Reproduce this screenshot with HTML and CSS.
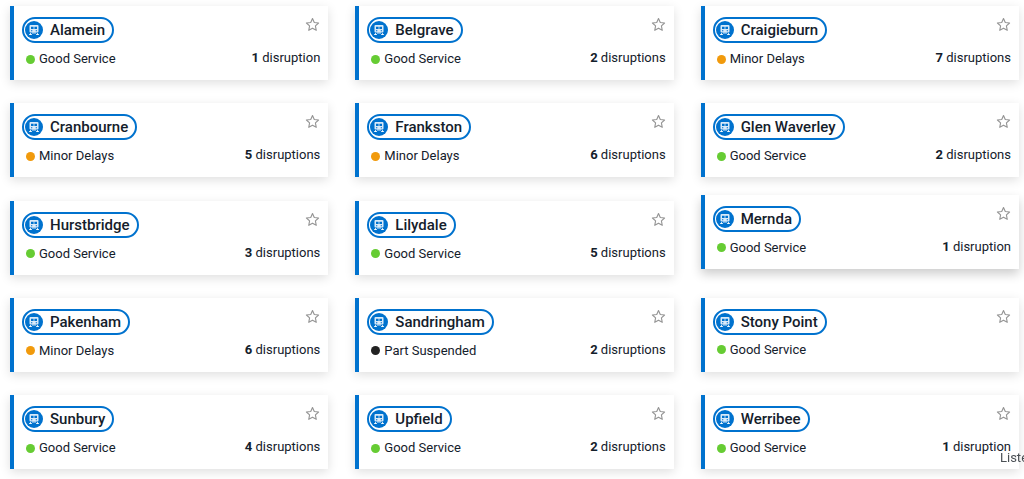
FILE: index.html
```
<!DOCTYPE html>
<html lang="en">
<head>
<meta charset="utf-8">
<meta name="viewport" content="width=device-width, initial-scale=1">
<title>Train lines</title>
<link rel="stylesheet" href="styles.css">
</head>
<body>
<svg class="sprite" aria-hidden="true">
  <symbol id="train" viewBox="0 0 18 18">
    <circle cx="9" cy="9" r="9" fill="#0072ce"/>
    <path d="M5.500 4h7q1 0 1 1v5.500q0 1-1 1h-7q-1 0-1-1V5q0-1 1-1z" fill="#fff" fill-opacity=".85"/>
    <path d="M6 5.800h2.600v2.200H6zM9.400 5.800H12v2.200H9.400zM6 9.200h1.300v1H6zM10.700 9.200H12v1h-1.300z" fill="#0072ce"/>
    <path d="M5.500 12v2M12.500 12v2M4 13.500h3M11 13.500h3M7 12h4" stroke="#fff" stroke-opacity=".8" fill="none"/>
  </symbol>
  <symbol id="star" viewBox="0 0 16 16">
    <path d="M8 1.700l1.900 4.200 4.600.5-3.400 3.100.9 4.700L8 11.900l-4 2.300.9-4.700-3.400-3.100 4.600-.5z" fill="none" stroke="#959595" stroke-width="1.200" stroke-linejoin="round"/>
  </symbol>
</svg>
<main class="lines">
  <article class="card"><a class="line" href="#alamein"><svg class="train"><use href="#train"/></svg>Alamein</a><button class="favourite" type="button" aria-label="Favourite Alamein"><svg class="star"><use href="#star"/></svg></button><span class="status good">Good Service</span><span class="count"><b>1</b> disruption</span></article>
  <article class="card"><a class="line" href="#belgrave"><svg class="train"><use href="#train"/></svg>Belgrave</a><button class="favourite" type="button" aria-label="Favourite Belgrave"><svg class="star"><use href="#star"/></svg></button><span class="status good">Good Service</span><span class="count"><b>2</b> disruptions</span></article>
  <article class="card"><a class="line" href="#craigieburn"><svg class="train"><use href="#train"/></svg>Craigieburn</a><button class="favourite" type="button" aria-label="Favourite Craigieburn"><svg class="star"><use href="#star"/></svg></button><span class="status minor">Minor Delays</span><span class="count"><b>7</b> disruptions</span></article>
  <article class="card"><a class="line" href="#cranbourne"><svg class="train"><use href="#train"/></svg>Cranbourne</a><button class="favourite" type="button" aria-label="Favourite Cranbourne"><svg class="star"><use href="#star"/></svg></button><span class="status minor">Minor Delays</span><span class="count"><b>5</b> disruptions</span></article>
  <article class="card"><a class="line" href="#frankston"><svg class="train"><use href="#train"/></svg>Frankston</a><button class="favourite" type="button" aria-label="Favourite Frankston"><svg class="star"><use href="#star"/></svg></button><span class="status minor">Minor Delays</span><span class="count"><b>6</b> disruptions</span></article>
  <article class="card"><a class="line" href="#glen-waverley"><svg class="train"><use href="#train"/></svg>Glen Waverley</a><button class="favourite" type="button" aria-label="Favourite Glen Waverley"><svg class="star"><use href="#star"/></svg></button><span class="status good">Good Service</span><span class="count"><b>2</b> disruptions</span></article>
  <article class="card"><a class="line" href="#hurstbridge"><svg class="train"><use href="#train"/></svg>Hurstbridge</a><button class="favourite" type="button" aria-label="Favourite Hurstbridge"><svg class="star"><use href="#star"/></svg></button><span class="status good">Good Service</span><span class="count"><b>3</b> disruptions</span></article>
  <article class="card"><a class="line" href="#lilydale"><svg class="train"><use href="#train"/></svg>Lilydale</a><button class="favourite" type="button" aria-label="Favourite Lilydale"><svg class="star"><use href="#star"/></svg></button><span class="status good">Good Service</span><span class="count"><b>5</b> disruptions</span></article>
  <article class="card raised"><a class="line" href="#mernda"><svg class="train"><use href="#train"/></svg>Mernda</a><button class="favourite" type="button" aria-label="Favourite Mernda"><svg class="star"><use href="#star"/></svg></button><span class="status good">Good Service</span><span class="count"><b>1</b> disruption</span></article>
  <article class="card"><a class="line" href="#pakenham"><svg class="train"><use href="#train"/></svg>Pakenham</a><button class="favourite" type="button" aria-label="Favourite Pakenham"><svg class="star"><use href="#star"/></svg></button><span class="status minor">Minor Delays</span><span class="count"><b>6</b> disruptions</span></article>
  <article class="card"><a class="line" href="#sandringham"><svg class="train"><use href="#train"/></svg>Sandringham</a><button class="favourite" type="button" aria-label="Favourite Sandringham"><svg class="star"><use href="#star"/></svg></button><span class="status suspended">Part Suspended</span><span class="count"><b>2</b> disruptions</span></article>
  <article class="card quiet"><a class="line" href="#stony-point"><svg class="train"><use href="#train"/></svg>Stony Point</a><button class="favourite" type="button" aria-label="Favourite Stony Point"><svg class="star"><use href="#star"/></svg></button><span class="status good">Good Service</span></article>
  <article class="card"><a class="line" href="#sunbury"><svg class="train"><use href="#train"/></svg>Sunbury</a><button class="favourite" type="button" aria-label="Favourite Sunbury"><svg class="star"><use href="#star"/></svg></button><span class="status good">Good Service</span><span class="count"><b>4</b> disruptions</span></article>
  <article class="card"><a class="line" href="#upfield"><svg class="train"><use href="#train"/></svg>Upfield</a><button class="favourite" type="button" aria-label="Favourite Upfield"><svg class="star"><use href="#star"/></svg></button><span class="status good">Good Service</span><span class="count"><b>2</b> disruptions</span></article>
  <article class="card"><a class="line" href="#werribee"><svg class="train"><use href="#train"/></svg>Werribee</a><button class="favourite" type="button" aria-label="Favourite Werribee"><svg class="star"><use href="#star"/></svg></button><span class="status good">Good Service</span><span class="count"><b>1</b> disruption</span></article>
</main>
<span class="listen">Listen</span>
</body>
</html>
```
FILE: styles.css
```
* { box-sizing: border-box; }

body {
  margin: 0;
  background: #fff;
  color: #14202b;
  font: 13px/20px Roboto, sans-serif;
}

.sprite {
  position: absolute;
  width: 0;
  height: 0;
}

.lines {
  display: grid;
  grid-template-columns: repeat(3, 1fr);
  column-gap: 27px;
  align-content: space-between;
  min-height: 100vh;
  padding: 6px 5px 10px 10px;
}

.card {
  display: grid;
  grid-template-columns: 1fr auto;
  grid-template-rows: 26px 20px;
  row-gap: 6px;
  padding: 11px 8px;
  border-left: 4px solid #0072ce;
  background: #fff;
  box-shadow: 0 3px 10px rgba(0, 0, 0, .13);
}

.raised {
  transform: translateY(-6px);
  box-shadow: 0 5px 10px rgba(0, 0, 0, .2);
}

.line {
  display: flex;
  align-items: center;
  justify-self: start;
  gap: 7px;
  padding: 0 7px 0 1px;
  border: 2px solid #0072ce;
  border-radius: 13px;
  color: #14202b;
  font: 500 15px/22px Roboto, sans-serif;
  text-decoration: none;
}

.train {
  width: 18px;
  height: 18px;
}

.favourite {
  align-self: start;
  justify-self: end;
  display: flex;
  padding: 0;
  border: 0;
  background: none;
}

.star {
  width: 15px;
  height: 15px;
}

.status {
  display: flex;
  align-items: center;
  gap: 4px;
  padding-left: 4px;
}

.status::before {
  content: "";
  width: 9px;
  height: 9px;
  border-radius: 50%;
  background: #66cc33;
}

.minor::before { background: #f19a0c; }
.suspended::before { background: #222; }

.quiet { row-gap: 5px; }

.count {
  line-height: 18px;
  text-align: right;
}

.listen {
  position: fixed;
  right: 0;
  bottom: 11px;
  width: 24px;
  overflow: hidden;
  color: #4a4f54;
  white-space: nowrap;
}
```
